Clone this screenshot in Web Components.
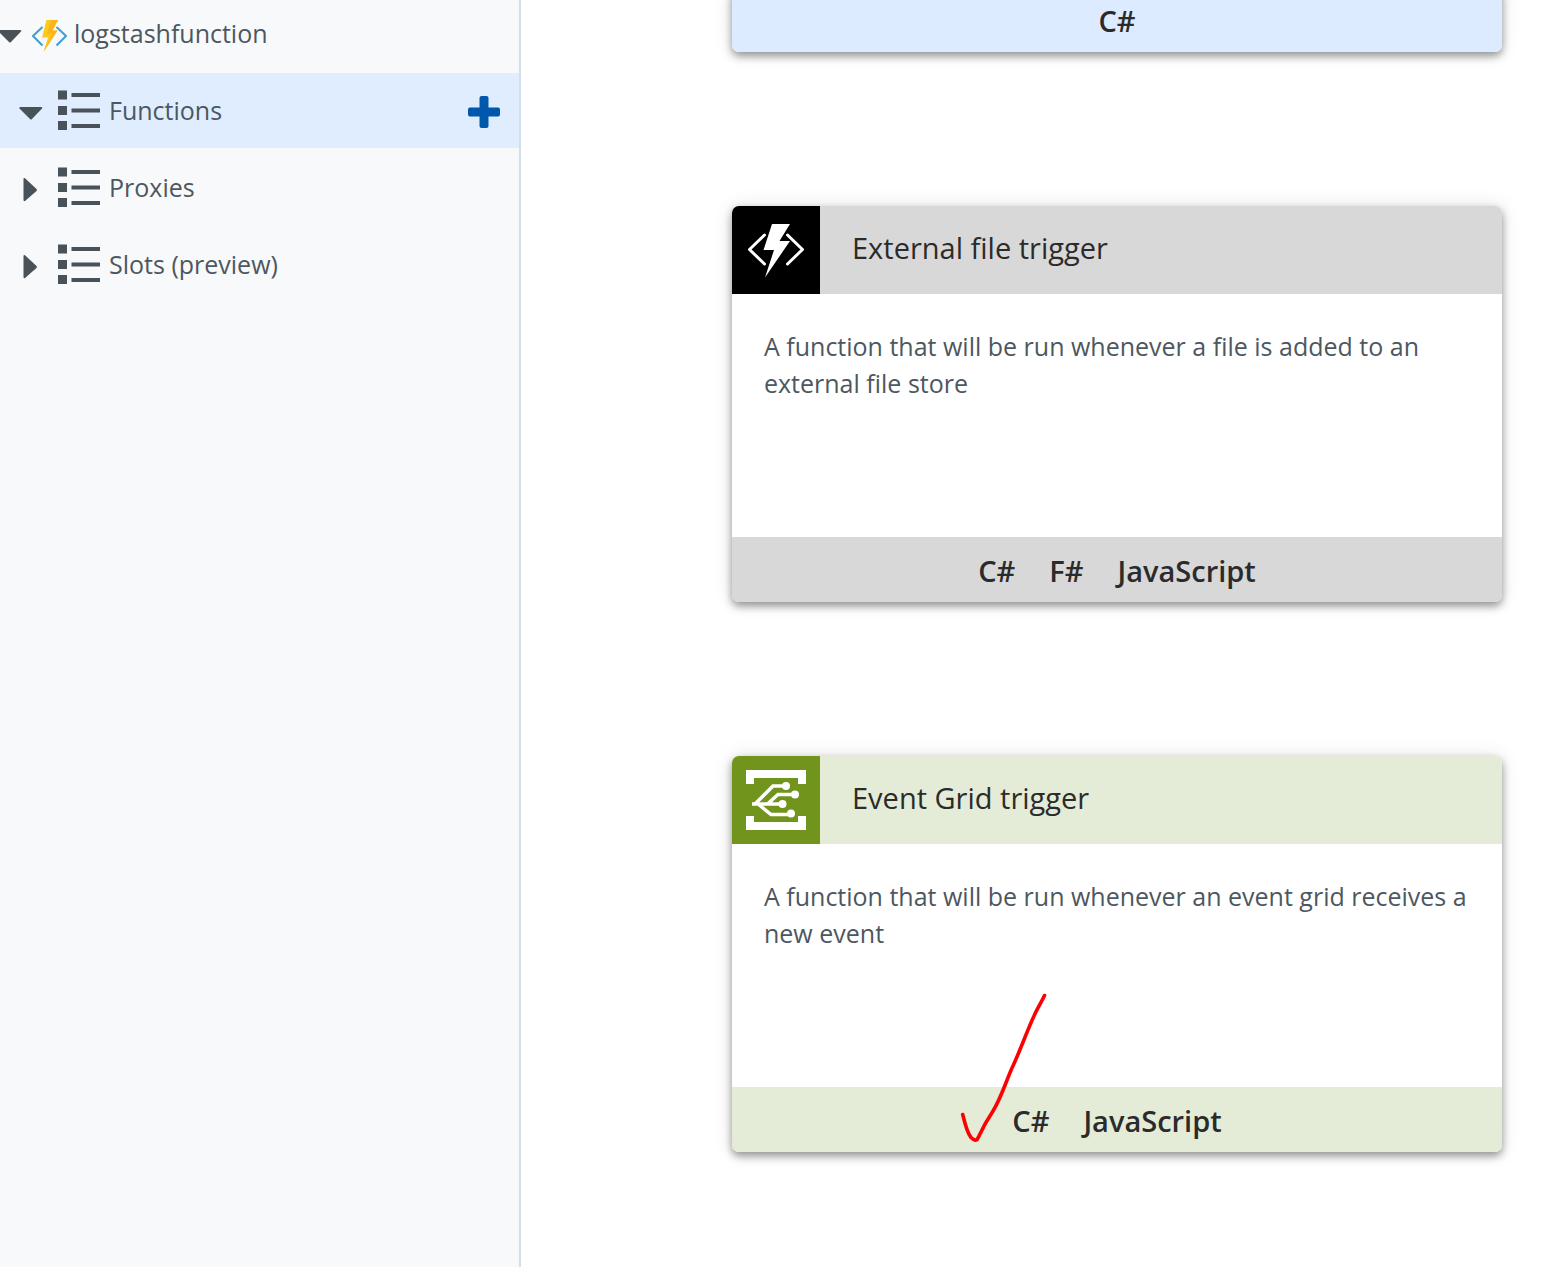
<!DOCTYPE html>
<html lang="en">
<head>
<meta charset="utf-8">
<title>logstashfunction</title>
<style>
  html, body { height: 100%; margin: 0; }
  body { font-family: "Segoe UI", "Open Sans", "Noto Sans", sans-serif; background: #fff; overflow: hidden; }
</style>
</head>
<body>
<functions-app></functions-app>

<template id="app">
  <style>
    :host { display: flex; height: 100vh; overflow: hidden; }
    nav { flex: 0 0 521px; box-sizing: border-box; background: #f8f9fb; border-right: 2px solid #d3dfe6; overflow: hidden; }
    .tree { display: flex; flex-direction: column; gap: 2px; margin-top: -4px; }
    main { flex: 1; min-width: 0; padding: 0 62px 0 211px; overflow: hidden; }
    .cards { display: flex; flex-direction: column; gap: 154px; margin-top: -13px; }
  </style>
  <nav aria-label="Resources">
    <div class="tree">
      <tree-row level="0" open>
        <svg slot="icon" width="35" height="39" viewBox="0 -6 35 39" aria-hidden="true">
          <path d="M10.500 7L1 16L10.500 25.500M24.500 7L34 16L24.500 25.500" fill="none" stroke="#3f9fcf" stroke-width="2"/>
          <path d="M14.500 0H26L20.500 10.500H25.500L11.500 32L16 17.500H10Z" fill="#fdc91c"/>
          <path d="M19 0H26L20.500 10.500H25.500L11.500 32L20.500 13.500H15Z" fill="#fbb51c"/>
        </svg>
        logstashfunction
      </tree-row>
      <tree-row level="1" open selected addable><list-icon slot="icon"></list-icon>Functions</tree-row>
      <tree-row level="1"><list-icon slot="icon"></list-icon>Proxies</tree-row>
      <tree-row level="1"><list-icon slot="icon"></list-icon>Slots (preview)</tree-row>
    </div>
  </nav>
  <main>
    <div class="cards">
      <template-card style="--tint:#dcebff" footer-only languages="C#"></template-card>
      <template-card style="--tint:#d8d8d8;--brand:#000" languages="C#,F#,JavaScript">
        <svg slot="icon" viewBox="0 0 88 88" aria-hidden="true">
          <path d="M32.500 29L17.500 43.500L32.500 58M55.500 29L70.500 43.500L55.500 58" fill="none" stroke="#fff" stroke-width="3" stroke-linecap="round" stroke-linejoin="round"/>
          <path d="M40 18H58L47.500 35H58L33 71.500L42 44H31.500Z" fill="#fff"/>
        </svg>
        <span slot="title">External file trigger</span>
        A function that will be run whenever a file is added to an external file store
      </template-card>
      <template-card style="--tint:#e4ebd7;--brand:#71941c" languages="C#,JavaScript" ticked>
        <svg slot="icon" viewBox="0 0 88 88" aria-hidden="true">
          <path d="M14 14H74V28H66V22H22V28H14ZM14 60H22V66H66V60H74V74H14Z" fill="#fff"/>
          <g fill="none" stroke="#fff" stroke-width="3.500">
            <path d="M20 48H50M23 48L41 30H54M35.500 48L46 38.500H63M26 48L39 58.500H59"/>
          </g>
          <g fill="#fff"><circle cx="54" cy="30" r="4"/><circle cx="63" cy="38.500" r="4"/><circle cx="50.500" cy="48" r="4"/><circle cx="59" cy="57.500" r="4"/></g>
        </svg>
        <span slot="title">Event Grid trigger</span>
        A function that will be run whenever an event grid receives a new event
      </template-card>
    </div>
  </main>
</template>

<template id="list-icon">
  <style>:host { display: block; } svg { display: block; }</style>
  <svg width="43" height="41" viewBox="0 0 43 41" fill="#495159" aria-hidden="true">
    <path d="M0 .500H9V9.500H0ZM0 16H9V25H0ZM0 31H9V40H0ZM13.500 3H42V7H13.500ZM13.500 18.500H42V22.500H13.500ZM13.500 34H42V38H13.500Z"/>
  </svg>
</template>

<template id="tree-row">
  <style>
    :host { display: flex; align-items: center; height: 75px; color: #4d5760; font-size: 25px; }
    :host([selected]) { background: #e0edff; }
    button { font: inherit; color: inherit; background: none; border: 0; padding: 0; cursor: pointer; }
    .item { flex: 1; min-width: 0; height: 100%; display: flex; align-items: center; text-align: left; }
    svg { display: block; }
    .arrow { width: 22px; height: 24px; margin-right: 10px; }
    .label { padding: 0 0 2px 7px; white-space: nowrap; }
    :host([level="1"]) .item { padding-left: 19px; }
    :host([level="1"]) .arrow { width: 24px; margin-right: 15px; }
    :host([level="1"]) .label { padding-left: 8px; }
    .add { padding: 2px 19px 0 0; }
  </style>
  <button class="item" type="button">
    <svg class="arrow" fill="#495159" aria-hidden="true"></svg>
    <slot name="icon"></slot>
    <span class="label"><slot></slot></span>
  </button>
</template>

<template id="template-card">
  <style>
    :host { display: block; position: relative; border-radius: 7px; background: #fff; box-shadow: 0 4px 8px rgba(0,0,0,.4), 0 0 20px rgba(0,0,0,.1); }
    header { display: flex; height: 88px; background: var(--tint); border-radius: 7px 7px 0 0; overflow: hidden; }
    .icon { flex: 0 0 88px; background: var(--brand); }
    ::slotted(svg) { display: block; width: 88px; height: 88px; }
    h2 { margin: 0; padding: 0 0 4px 32px; align-self: center; font-size: 29px; line-height: 40px; font-weight: 400; color: #2b2b2b; }
    p { box-sizing: border-box; min-height: 243px; margin: 0; padding: 34px 32px; font-size: 25px; line-height: 37px; color: #4d5760; }
    footer { display: flex; justify-content: center; align-items: center; gap: 34px; box-sizing: border-box; height: 65px; padding-top: 2px; background: var(--tint); border-radius: 0 0 7px 7px; }
    button { border: 0; background: none; padding: 0; font: 600 29px/40px "Segoe UI", "Open Sans", "Noto Sans", sans-serif; color: #2b2b2b; cursor: pointer; }
    .tick { position: absolute; left: 228px; bottom: 8px; pointer-events: none; }
  </style>
  <header><div class="icon"><slot name="icon"></slot></div><h2><slot name="title"></slot></h2></header>
  <p><slot></slot></p>
  <footer></footer>
</template>

<script>
  const stamp = (host, id) => {
    const root = host.attachShadow({ mode: "open" });
    root.append(document.getElementById(id).content.cloneNode(true));
    return root;
  };

  customElements.define("list-icon", class extends HTMLElement {
    constructor() { super(); stamp(this, "list-icon"); }
  });

  customElements.define("tree-row", class extends HTMLElement {
    connectedCallback() {
      if (this.shadowRoot) return;
      const root = stamp(this, "tree-row");
      const arrow = root.querySelector(".arrow");
      arrow.setAttribute("viewBox", this.getAttribute("level") === "0" ? "2 0 22 24" : "0 0 24 24");
      const open = this.hasAttribute("open");
      arrow.innerHTML = open
        ? '<path d="M1 8H22Q24 8 23 9.500L13 20Q12 21 11 20L.500 9.500Q0 8 1 8Z"/>'
        : '<path d="M4.500 3Q4.500 1.500 6 2.200L17.500 13Q18.500 14 17.500 15L6 25Q4.500 25.500 4.500 24Z"/>';
      arrow.style.overflow = open ? "hidden" : "visible";
      root.querySelector(".item").setAttribute("aria-expanded", open);
      if (this.hasAttribute("addable")) {
        const add = document.createElement("button");
        add.className = "add";
        add.type = "button";
        add.setAttribute("aria-label", "New function");
        add.innerHTML = '<svg width="32" height="32" viewBox="0 0 32 32" fill="#0058ad"><path d="M13.500 0H18.500Q20.500 0 20.500 2V11.500H30Q32 11.500 32 13.500V18.500Q32 20.500 30 20.500H20.500V30Q20.500 32 18.500 32H13.500Q11.500 32 11.500 30V20.500H2Q0 20.500 0 18.500V13.500Q0 11.500 2 11.500H11.500V2Q11.500 0 13.500 0Z"/></svg>';
        root.append(add);
      }
    }
  });

  customElements.define("template-card", class extends HTMLElement {
    connectedCallback() {
      if (this.shadowRoot) return;
      const root = stamp(this, "template-card");
      if (this.hasAttribute("footer-only")) {
        root.querySelector("header").remove();
        root.querySelector("p").remove();
      }
      for (const name of this.getAttribute("languages").split(",")) {
        const button = document.createElement("button");
        button.type = "button";
        button.textContent = name;
        root.querySelector("footer").append(button);
      }
      if (this.hasAttribute("ticked")) {
        root.querySelector("footer").insertAdjacentHTML("afterend",
          '<svg class="tick" width="88" height="152" viewBox="0 0 88 152" fill="none" stroke="#fd0002" stroke-width="3.600" stroke-linecap="round" stroke-linejoin="round" aria-hidden="true"><path d="M2.700 122.500C5 132 8 142 11 145.500Q16 150.500 18 146C23 135 27 128 33 119C41 106 45 92 52 76C60 59 67 39 74 24C77 17 81 11 84.500 3.500"/></svg>');
      }
    }
  });

  customElements.define("functions-app", class extends HTMLElement {
    constructor() { super(); stamp(this, "app"); }
  });
</script>
</body>
</html>
